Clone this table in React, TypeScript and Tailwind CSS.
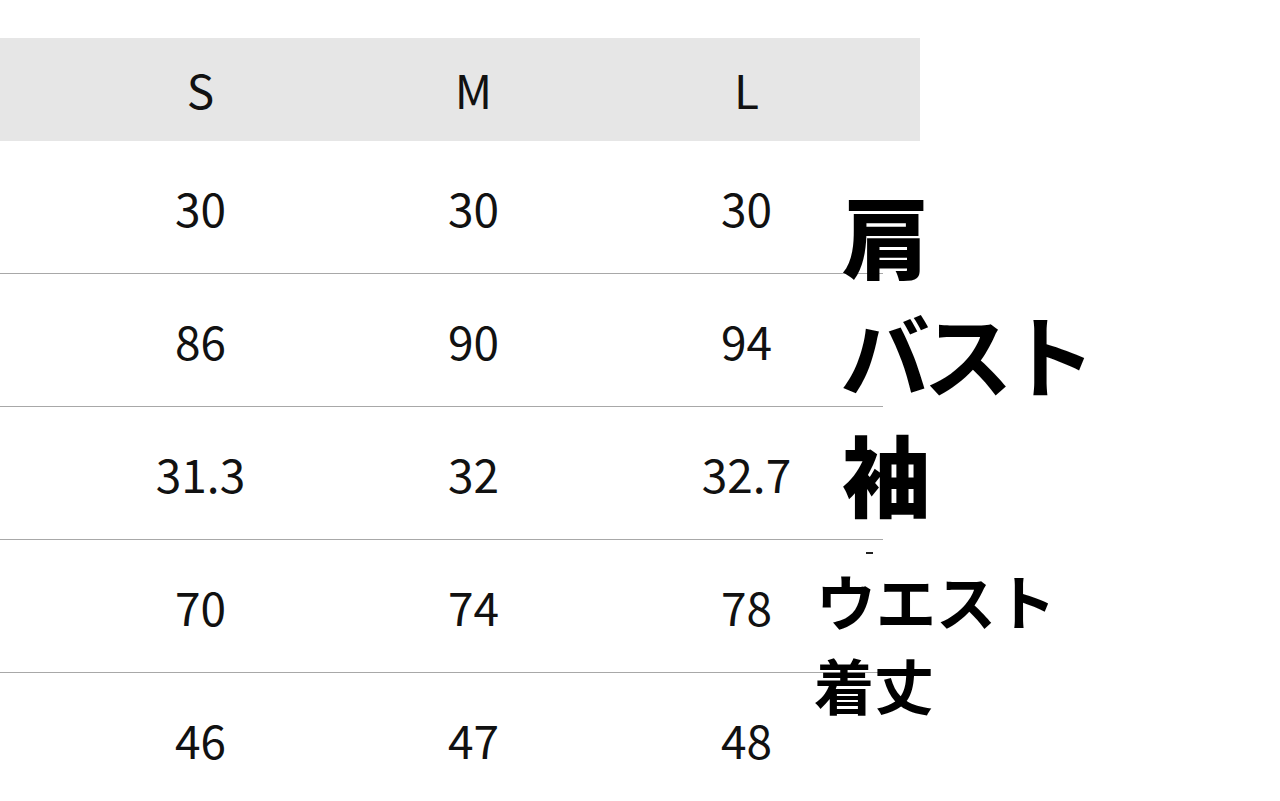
import React from "react";

const rows = [
  ["30", "30", "30"],
  ["86", "90", "94"],
  ["31.3", "32", "32.7"],
  ["70", "74", "78"],
  ["46", "47", "48"],
];

const numFont = { fontFamily: '"Noto Sans CJK JP", "Noto Sans", sans-serif' };

export default function App() {
  return (
    <div className="relative w-full h-[801px] bg-white overflow-hidden" style={numFont}>
      <div className="pt-[38px]">
        <div className="w-[920px] h-[103px] bg-[#e6e6e6] grid grid-cols-[64px_273px_273px_273px] items-center text-[46px] text-[#111]">
          <div />
          <div className="text-center">S</div>
          <div className="text-center">M</div>
          <div className="text-center">L</div>
        </div>
        <div className="w-[883px]">
          {rows.map((r, i) => (
            <div
              key={i}
              className={
                "h-[133px] grid grid-cols-[64px_273px_273px_273px] items-center text-[46px] text-[#111] " +
                (i < rows.length - 1 ? "border-b-[1.5px] border-[#a8a8a8]" : "")
              }
            >
              <div />
              {r.map((v, j) => (
                <div key={j} className="text-center">
                  {v}
                </div>
              ))}
            </div>
          ))}
        </div>
      </div>

      <div className="absolute left-[814px] top-[190px] flex flex-col items-start text-black leading-none">
        <div className="ml-[28px] text-[88px] font-black">肩</div>
        <div className="ml-[26px] mt-[29px] text-[90px] font-bold tracking-[-7px]">バスト</div>
        <div className="ml-[28px] mt-[31px] text-[88px] font-black">袖</div>
        <div className="ml-[52px] mt-[36px] w-[7px] h-[2px] bg-[#222]" />
        <div className="ml-[2px] mt-[16px] text-[60px] font-bold">ウエスト</div>
        <div className="mt-[24px] text-[60px] font-bold">着丈</div>
      </div>
    </div>
  );
}
